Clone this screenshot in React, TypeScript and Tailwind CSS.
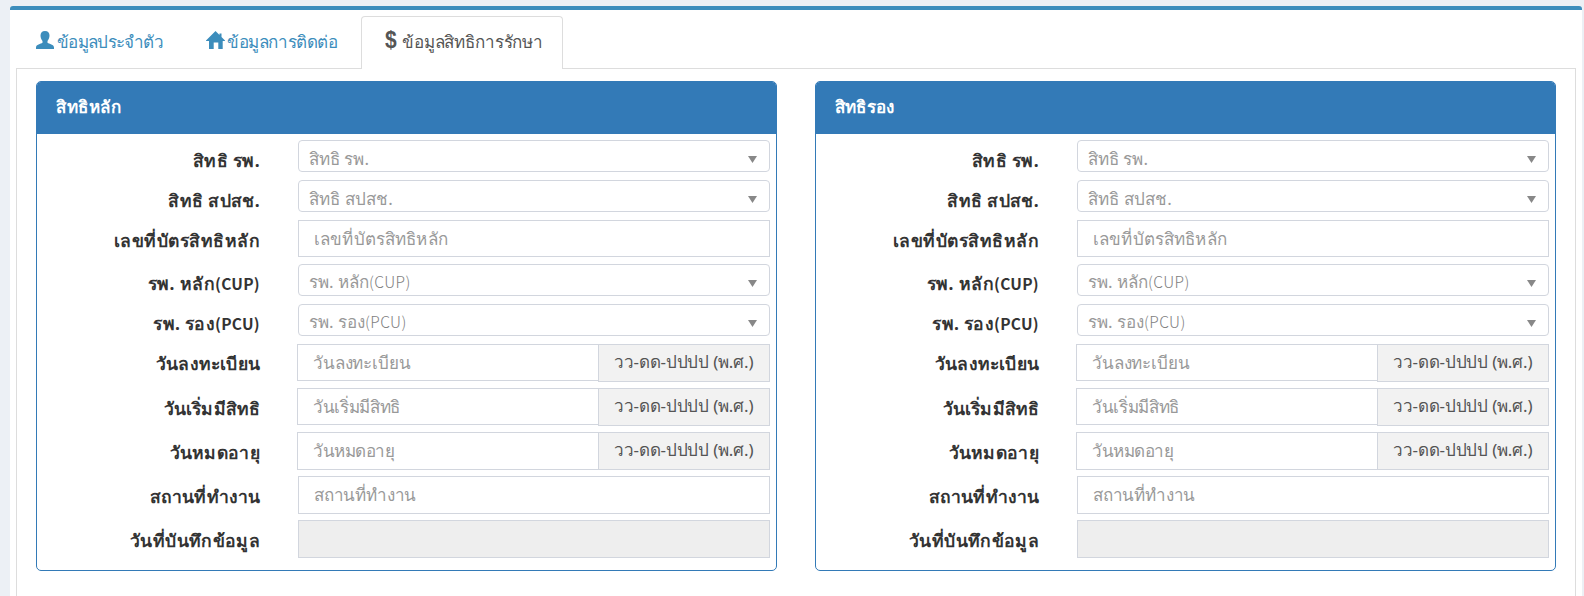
import React from "react";

type Kind = "select" | "input" | "date" | "readonly";
type Field = {
  label: string;
  placeholder: string;
  latin?: string;
  kind: Kind;
  row: string;
  box?: string;
  labelCls: string;
  textCls?: string;
};

const fields: Field[] = [
  { label: "สิทธิ รพ.", placeholder: "สิทธิ รพ.", kind: "select", row: "h-10", labelCls: "tracking-[0.4px] leading-[40px]", textCls: "leading-[35px]" },
  { label: "สิทธิ สปสช.", placeholder: "สิทธิ สปสช.", kind: "select", row: "h-10", labelCls: "tracking-[0.35px] leading-[40px]", textCls: "leading-[35px] tracking-[0.1px]" },
  { label: "เลขที่บัตรสิทธิหลัก", placeholder: "เลขที่บัตรสิทธิหลัก", kind: "input", row: "h-11", box: "h-[37px]", labelCls: "tracking-[0.5px] leading-[40px]", textCls: "tracking-[0.15px]" },
  { label: "รพ. หลัก", latin: "(CUP)", placeholder: "รพ. หลัก", kind: "select", row: "h-10", labelCls: "tracking-[0.4px] leading-[38px]", textCls: "leading-[34px]" },
  { label: "รพ. รอง", latin: "(PCU)", placeholder: "รพ. รอง", kind: "select", row: "h-10", labelCls: "tracking-[0.3px] leading-[38px]", textCls: "leading-[34px]" },
  { label: "วันลงทะเบียน", placeholder: "วันลงทะเบียน", kind: "date", row: "h-11", box: "h-[37px]", labelCls: "tracking-[0.2px] leading-[38px]", textCls: "tracking-[-0.15px]" },
  { label: "วันเริ่มมีสิทธิ", placeholder: "วันเริ่มมีสิทธิ", kind: "date", row: "h-11", box: "h-[37px]", labelCls: "tracking-[0.1px] leading-[40px]", textCls: "tracking-[-0.35px]" },
  { label: "วันหมดอายุ", placeholder: "วันหมดอายุ", kind: "date", row: "h-11", box: "h-[38px]", labelCls: "tracking-[0.3px] leading-[40px]", textCls: "tracking-[-0.5px]" },
  { label: "สถานที่ทำงาน", placeholder: "สถานที่ทำงาน", kind: "input", row: "h-11", box: "h-[38px]", labelCls: "tracking-[0.1px] leading-[40px]", textCls: "tracking-[-0.2px]" },
  { label: "วันที่บันทึกข้อมูล", placeholder: "", kind: "readonly", row: "h-11", labelCls: "tracking-[0.35px] leading-[40px]" },
];

function Control({ field }: { field: Field }) {
  if (field.kind === "select") {
    return (
      <div className="ml-px flex h-8 items-start justify-between rounded-[4px] border border-[#d2d6de] bg-white pl-[10px] pr-3 text-[#999]">
        <span className={field.textCls}>
          {field.placeholder}
          {field.latin && (
            <span className="font-['Noto_Sans_CJK_JP',sans-serif] text-[15.500px] font-light leading-none tracking-[0.4px] text-[#808080]">{field.latin}</span>
          )}
        </span>
        <svg width="9" height="7" viewBox="0 0 9 7" className="mt-[15px]">
          <path d="M0 0h9L4.500 7z" fill="#888" />
        </svg>
      </div>
    );
  }
  if (field.kind === "date") {
    return (
      <div className="flex h-[38px] items-start">
        <div className={`flex-1 border border-r-0 border-[#d2d6de] bg-white pl-[15px] leading-[35px] text-[#999] ${field.box} ${field.textCls}`}>
          {field.placeholder}
        </div>
        <div className="h-[38px] w-[172px] border border-[#d2d6de] bg-[#f2f2f2] pl-[15px] leading-[34px] tracking-[-0.2px] text-[#555]">
          วว-ดด-ปปปป (พ.ศ.)
        </div>
      </div>
    );
  }
  if (field.kind === "readonly") {
    return <div className="ml-px h-[38px] border border-[#d2d6de] bg-[#eee]" />;
  }
  return (
    <div className={`ml-px border border-[#d2d6de] bg-white pl-[15px] leading-[35px] text-[#999] ${field.box} ${field.textCls}`}>
      {field.placeholder}
    </div>
  );
}

function Panel({ title, titleCls }: { title: string; titleCls: string }) {
  return (
    <section className="h-[490px] w-[741px] overflow-hidden rounded-[5px] border border-[#337ab7] bg-white">
      <h3 className={`h-[52px] bg-[#337ab7] pl-[19px] font-semibold leading-[50px] text-white ${titleCls}`}>{title}</h3>
      <div className="pt-[6px]">
        {fields.map((f) => (
          <div key={f.label} className={`flex items-start ${f.row}`}>
            <label className={`w-[223px] text-right text-[17.500px] font-bold text-[#333] ${f.labelCls}`}>
              {f.label}
              {f.latin && (
                <span className="font-['Noto_Sans_CJK_JP',sans-serif] text-[15.500px] leading-none tracking-[0.3px]">{f.latin}</span>
              )}
            </label>
            <div className="ml-[37px] w-[473px]">
              <Control field={f} />
            </div>
          </div>
        ))}
      </div>
    </section>
  );
}

export default function App() {
  return (
    <div className="h-[596px] overflow-hidden bg-[#ecf0f5] pl-[10px] pr-[2px] pt-[6px] font-['Noto_Sans','Liberation_Sans',sans-serif] text-[17px] whitespace-nowrap">
      <main className="h-[600px] rounded-t-[3px] border-t-4 border-[#3c8dbc] bg-white px-[6px] pt-[6px]">
        <nav className="flex h-[52px] items-end">
          <div className="flex h-[52px] w-[171px] items-start pl-5 text-[#3c8dbc]">
            <svg width="18" height="18" viewBox="0 0 18 18" className="mt-[15px]" fill="currentColor">
              <path d="M9 0c3 0 4.500 1.800 4.500 4.600 0 2-.8 4-2 5.300v1.800c1.700 1.300 6.500 1.500 6.500 4.800V18H0v-1.500c0-3.300 4.800-3.500 6.500-4.800V9.900c-1.200-1.300-2-3.300-2-5.300C4.500 1.800 6 0 9 0z" />
            </svg>
            <span className="ml-[3px] leading-[52px] tracking-[-0.7px]">ข้อมูลประจำตัว</span>
          </div>
          <div className="flex h-[52px] w-[174px] items-start pl-[19px] text-[#3c8dbc]">
            <svg width="19" height="18" viewBox="0 0 19 18" className="mt-[15px]" fill="currentColor">
              <path d="M9.500 0 13.500 4V2.500h2V6L19 9.500V10h-2.300v8h-4.400v-6.500H7.700V18H3v-8H0v-.5z" />
            </svg>
            <span className="ml-[2px] leading-[52px] tracking-[-0.4px]">ข้อมูลการติดต่อ</span>
          </div>
          <div className="relative z-10 -mb-px flex h-[53px] w-[202px] items-start rounded-t-[4px] border border-b-0 border-[#ddd] bg-white pl-[23px] text-[#555]">
            <span className="w-[17px] origin-center scale-y-110 font-['Liberation_Sans',sans-serif] text-[21px] font-bold leading-[46px]">$</span>
            <span className="leading-[50px] tracking-[-0.15px]">ข้อมูลสิทธิการรักษา</span>
          </div>
        </nav>
        <div className="flex h-[560px] gap-[38px] border border-[#ddd] pl-[19px] pt-3">
          <Panel title="สิทธิหลัก" titleCls="tracking-[0.5px]" />
          <Panel title="สิทธิรอง" titleCls="tracking-[0.2px]" />
        </div>
      </main>
    </div>
  );
}
